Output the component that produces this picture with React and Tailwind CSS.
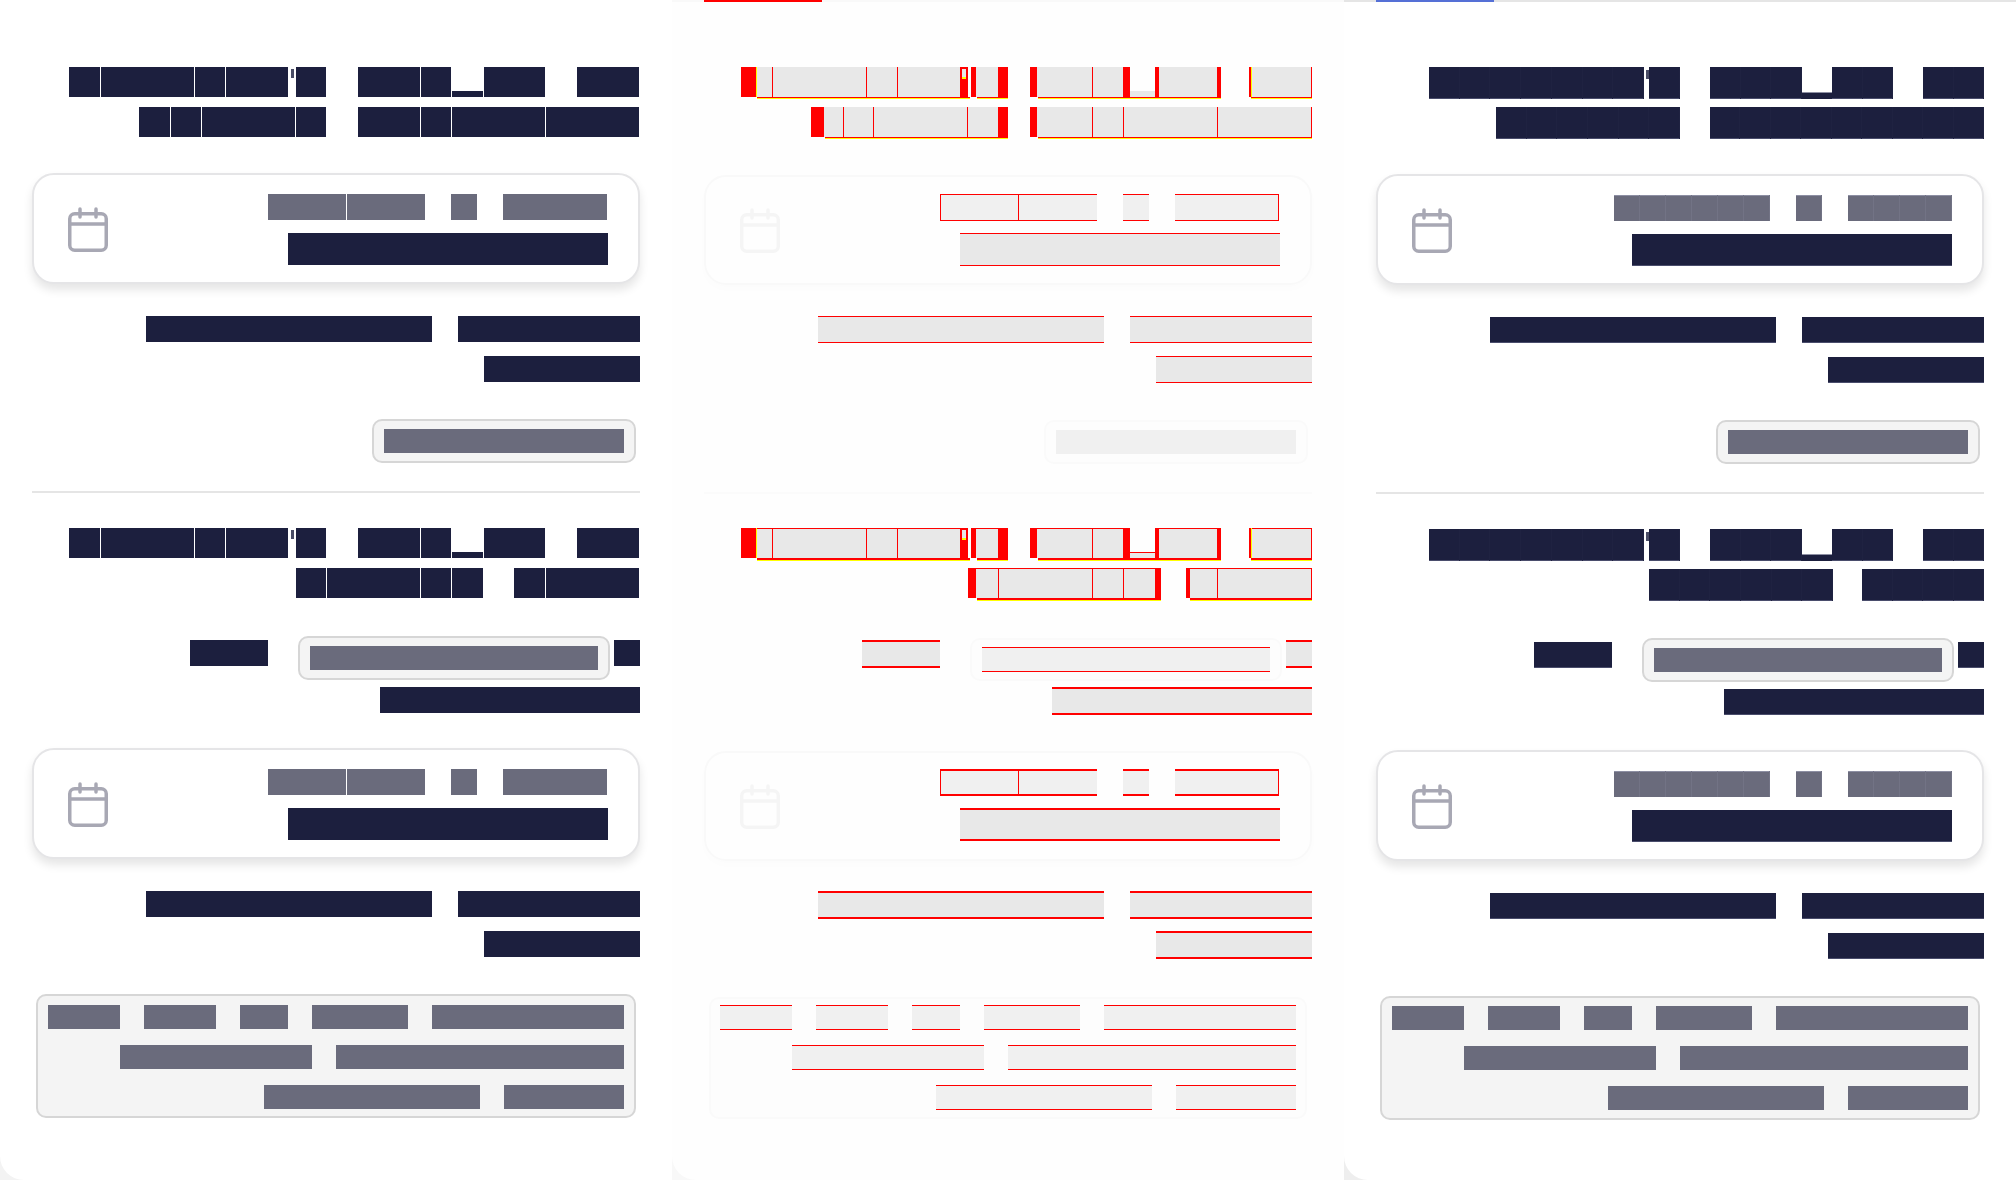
import React from "react";

// The reference has no legible text: every glyph is a solid box, so words are drawn as box runs.
const units = (n, total) => {
  const out = [];
  let used = 0;
  for (let i = 1; i <= n; i++) {
    const next = Math.round((total * i) / n);
    out.push(next - used);
    used = next;
  }
  return out;
};

const Bar = ({ w, cls }) => (
  <span className={"block shrink-0 " + cls} style={{ width: w }} />
);

const CalendarIcon = ({ cls }) => (
  <svg viewBox="0 0 40 45" fill="none" stroke="currentColor" strokeWidth="3.5" strokeLinecap="round" className={"h-[45px] w-[40px] shrink-0 " + cls}>
    <rect x="1.75" y="6.75" width="36.5" height="36.5" rx="5" />
    <path d="M2 17h36" />
    <path d="M12 2v8" />
    <path d="M28 2v8" />
  </svg>
);

const leftSkin = {
  rowH: "h-[30px]",
  notch: "mt-[24px] h-[6px]",
  tick: "ml-[2px] mr-px mt-0.5 h-[9px] w-[3px] bg-[#4a4d66]",
  gap: "gap-px",
  navy: "bg-[#1c1f3e]",
  gray: "bg-[#6a6b7c]",
  titleGap: "gap-[10px]",
  rowPr: "pr-px",
  cardMt: "mt-[36px]",
  inlineMt: "mt-[38px]",
  boxPt: "pt-[9px]",
};

const rightSkin = {
  rowH: "h-[32px] shadow-[inset_-1px_0_0_#1f2241,inset_0_-1px_0_#4a4d6c]",
  notch: "mt-[25px] h-[7px] shadow-[inset_0_1px_0_#8d8fa3]",
  tick: "ml-[2px] mt-[3px] h-[9px] w-[3px] bg-[#4a4d66]",
  gap: "gap-0",
  navy: "bg-[#1c1f3e] shadow-[inset_0_-1px_0_#4a4d6c]",
  gray: "bg-[#6a6b7c] shadow-[inset_-1px_0_0_#727385,inset_0_1px_0_#8d8fa3]",
  titleGap: "gap-2",
  rowPr: "",
  cardMt: "mt-[35px]",
  inlineMt: "mt-[37px]",
  boxPt: "pt-[8px]",
};

const Word = ({ parts, skin }) => (
  <span className={"flex items-start " + skin.gap}>
    {parts.map((p, i) => {
      if (p === "tick") return <span key={i} className={"block shrink-0 " + skin.tick} />;
      if (typeof p === "object") return <Bar key={i} w={p.notch} cls={"bg-[#1c1f3e] " + skin.notch} />;
      return <Bar key={i} w={p} cls={"bg-[#1c1f3e] " + skin.rowH} />;
    })}
  </span>
);

const TitleRow = ({ words, gap, skin }) => (
  <div className={"flex justify-end " + gap + " " + skin.rowPr}>
    {words.map((w, i) => (
      <Word key={i} parts={w} skin={skin} />
    ))}
  </div>
);

const InfoCard = ({ skin, split, tail }) => (
  <div className="flex h-[111px] items-start justify-between rounded-[22px] border-2 border-[#e5e5e7] bg-white pl-[34px] pr-[30px] pt-[19px] shadow-[0_6px_10px_rgba(0,0,0,0.1)]">
    <CalendarIcon cls="mt-[13px] text-[#a8a8b4]" />
    <div className="flex flex-col items-end gap-[13px]">
      <div className={"flex gap-[26px] " + skin.rowPr}>
        <div className={"flex " + skin.gap}>
          {split.map((w, i) => (
            <Bar key={i} w={w} cls={"h-[26px] " + skin.gray} />
          ))}
        </div>
        <Bar w={26} cls={"h-[26px] " + skin.gray} />
        <div className="flex">
          {tail.map((w, i) => (
            <Bar key={i} w={w} cls={"h-[26px] " + skin.gray} />
          ))}
        </div>
      </div>
      <Bar w={320} cls={"h-[32px] " + skin.navy} />
    </div>
  </div>
);

const DetailRows = ({ skin, mt }) => (
  <div className={"flex flex-col items-end gap-[14px] " + mt}>
    <div className="flex gap-[26px]">
      <Bar w={286} cls={"h-[26px] " + skin.navy} />
      <Bar w={182} cls={"h-[26px] " + skin.navy} />
    </div>
    <Bar w={156} cls={"h-[26px] " + skin.navy} />
  </div>
);

const Chip = ({ w, cls = "" }) => (
  <div className={"flex h-[44px] items-center justify-center rounded-[10px] border-2 border-[#d6d6d6] bg-[#f4f4f4] " + cls} style={{ width: w + 24 }}>
    <Bar w={w} cls="h-[24px] bg-[#6a6b7c]" />
  </div>
);

const boxRows = [
  [72, 72, 48, 96, 192],
  [192, 288],
  [216, 120],
];

const ShotPanel = ({ skin, t1, t2, split, tail, corner, track }) => (
  <div className={"h-[1180px] " + corner}>
    <div className="h-full rounded-bl-[24px] bg-white">
      {track}
      <div className="px-8 pt-[65px]">
        <div className={"flex flex-col " + skin.titleGap}>
          <TitleRow {...t1[0]} skin={skin} />
          <TitleRow {...t1[1]} skin={skin} />
        </div>
        <div className={skin.cardMt}>
          <InfoCard skin={skin} split={split} tail={tail} />
        </div>
        <DetailRows skin={skin} mt="mt-[32px]" />
        <div className="mt-[37px] flex justify-end">
          <Chip w={240} cls="mr-1" />
        </div>
        <div className="mt-[28px] h-0.5 bg-[#e5e5e5]" />
        <div className={"mt-[35px] flex flex-col " + skin.titleGap}>
          <TitleRow {...t2[0]} skin={skin} />
          <TitleRow {...t2[1]} skin={skin} />
        </div>
        <div className={"flex items-start justify-end " + skin.inlineMt}>
          <Bar w={78} cls={"mt-1 h-[26px] " + skin.navy} />
          <Chip w={288} cls="ml-[30px] mr-1" />
          <Bar w={26} cls={"mt-1 h-[26px] " + skin.navy} />
        </div>
        <div className="mt-[7px] flex justify-end">
          <Bar w={260} cls={"h-[26px] " + skin.navy} />
        </div>
        <div className="mt-[35px]">
          <InfoCard skin={skin} split={split} tail={tail} />
        </div>
        <DetailRows skin={skin} mt="mt-[32px]" />
        <div className={"mx-1 mt-[37px] flex h-[124px] flex-col items-end gap-4 rounded-[10px] border-2 border-[#d6d6d6] bg-[#f4f4f4] px-[10px] " + skin.boxPt}>
          {boxRows.map((row, i) => (
            <div key={i} className="flex gap-6">
              {row.map((w, j) => (
                <Bar key={j} w={w} cls="h-[24px] bg-[#6a6b7c]" />
              ))}
            </div>
          ))}
        </div>
      </div>
    </div>
  </div>
);

// diff panel: r red, g grey, w white, y yellow, t red with the apostrophe, n notch
const DiffWord = ({ parts, under, top, thick }) => (
  <span className="flex flex-col">
    <span className="flex h-[30px]">
      {parts.map(([tone, w], i) => {
        if (tone === "r") return <Bar key={i} w={w} cls="h-full bg-[#ff0000]" />;
        if (tone === "y") return <Bar key={i} w={w} cls="h-full bg-[#ffff00]" />;
        if (tone === "w") return <Bar key={i} w={w} cls="h-full" />;
        if (tone === "g") return <Bar key={i} w={w} cls={"h-full bg-[#e8e8e8] " + (top ? "border-t border-[#ff0000]" : "")} />;
        if (tone === "t")
          return (
            <span key={i} className="flex h-full shrink-0 justify-center bg-[#ff0000]" style={{ width: w }}>
              <span className="mt-0.5 h-[10px] w-1 border-b-2 border-[#ffff00] bg-[#e8e8e8]" />
            </span>
          );
        return <Bar key={i} w={w} cls={"mt-[24px] h-[6px] bg-[#e8e8e8] " + (top ? "border-t border-[#ff0000]" : "")} />;
      })}
    </span>
    <span className={"flex bg-white " + (thick ? "h-0.5" : "h-px")}>
      {under.map(([ml, w], i) => (
        <span key={i} className="block bg-[#ff0000]" style={{ marginLeft: ml, width: w }} />
      ))}
    </span>
    <span className="flex h-px">
      {under.map(([ml, w], i) => (
        <span key={i} className="block bg-[#ffff00]" style={{ marginLeft: ml, width: w }} />
      ))}
    </span>
  </span>
);

const title1Words = [
  {
    parts: [["r", 15], ["y", 1], ["g", 15], ["r", 1], ["g", 93], ["r", 1], ["g", 30], ["r", 1], ["g", 62], ["t", 8], ["w", 3], ["r", 5], ["g", 22], ["r", 10]],
    under: [[16, 213], [7, 31]],
  },
  {
    parts: [["r", 7], ["g", 55], ["r", 1], ["g", 30], ["r", 7], ["n", 25], ["r", 4], ["g", 58], ["r", 4]],
    under: [[8, 183]],
  },
  { parts: [["r", 2], ["y", 1], ["g", 59], ["r", 1]], under: [[2, 61]] },
];

const DiffCard = ({ thick }) => {
  const edge = thick ? "border-y-2" : "border-y";
  return (
    <div className={"flex h-[110px] items-start justify-between rounded-[22px] border-2 border-[#f9f9f9] pl-[34px] pr-[30px] shadow-[0_4px_10px_rgba(0,0,0,0.012)] " + (thick ? "pt-4" : "pt-[17px]")}>
      <CalendarIcon cls={"text-[#f5f5f5] " + (thick ? "mt-[15px]" : "mt-[14px]")} />
      <div className="flex flex-col items-end gap-[12px]">
        <div className="flex pr-px">
          <Bar w={78} cls={"h-[27px] border-l bg-[#f0f0f0] border-[#ff0000] " + edge} />
          <Bar w={1} cls="h-[27px] bg-[#ff0000]" />
          <Bar w={78} cls={"h-[27px] bg-[#f0f0f0] border-[#ff0000] " + edge} />
          <Bar w={26} cls={"ml-[26px] h-[27px] bg-[#f0f0f0] border-[#ff0000] " + edge} />
          <Bar w={104} cls={"ml-[26px] h-[27px] border-r bg-[#f0f0f0] border-[#ff0000] " + edge} />
        </div>
        <Bar w={320} cls={"h-[33px] bg-[#e8e8e8] border-[#ff0000] " + edge} />
      </div>
    </div>
  );
};

const DiffRows = ({ thick, mt }) => {
  const cls = (thick ? "h-[28px] border-y-2" : "h-[27px] border-y") + " border-[#ff0000] bg-[#e8e8e8]";
  return (
    <div className={"flex flex-col items-end " + (thick ? "gap-3 " : "gap-[13px] ") + mt}>
      <div className="flex gap-[26px]">
        <Bar w={286} cls={cls} />
        <Bar w={182} cls={cls} />
      </div>
      <Bar w={156} cls={cls} />
    </div>
  );
};

const DiffPanel = () => (
  <div className="h-[1180px] bg-[#f8f8f8]">
    <div className="h-full rounded-bl-[24px] bg-[#fefefe]">
      <div className="h-0.5 bg-[#f9f9f9] pl-8">
        <div className="h-full w-[118px] bg-[#ff0000]" />
      </div>
      <div className="px-8 pt-[65px]">
        <div className="flex justify-end">
          <DiffWord {...title1Words[0]} />
          <span className="w-[22px]" />
          <DiffWord {...title1Words[1]} />
          <span className="w-[28px]" />
          <DiffWord {...title1Words[2]} />
        </div>
        <div className="mt-2 flex justify-end gap-[22px]">
          <DiffWord
            parts={[["r", 13], ["g", 19], ["r", 1], ["g", 29], ["r", 1], ["g", 93], ["r", 1], ["g", 30], ["r", 10]]}
            under={[[14, 183]]}
          />
          <DiffWord
            parts={[["r", 7], ["g", 55], ["r", 1], ["g", 30], ["r", 1], ["g", 93], ["r", 1], ["g", 93], ["r", 1]]}
            under={[[8, 274]]}
          />
        </div>
        <div className="mt-[36px]">
          <DiffCard />
        </div>
        <DiffRows mt="mt-[31px]" />
        <div className="mt-[37px] flex justify-end">
          <div className="mr-1 flex h-[44px] w-[264px] items-center justify-center rounded-[10px] border-2 border-[#fafafa] bg-[#fdfdfd]">
            <Bar w={240} cls="h-[24px] bg-[#f0f0f0]" />
          </div>
        </div>
        <div className="mt-[28px] h-0.5 bg-[#fbfbfb]" />
        <div className="mt-[34px] flex justify-end">
          <DiffWord {...title1Words[0]} top thick />
          <span className="w-[22px]" />
          <DiffWord {...title1Words[1]} top thick />
          <span className="w-[28px]" />
          <DiffWord {...title1Words[2]} top thick />
        </div>
        <div className="mt-[7px] flex justify-end gap-[25px]">
          <DiffWord
            parts={[["r", 8], ["g", 22], ["r", 1], ["g", 93], ["r", 1], ["g", 30], ["r", 1], ["g", 31], ["r", 6]]}
            under={[[9, 184]]}
            top
            thick
          />
          <DiffWord
            parts={[["r", 4], ["g", 27], ["r", 1], ["g", 93], ["r", 1]]}
            under={[[4, 122]]}
            top
            thick
          />
        </div>
        <div className="mt-[35px] flex items-start justify-end">
          <Bar w={78} cls="mt-1 h-[28px] border-y-2 border-[#ff0000] bg-[#e8e8e8]" />
          <div className="ml-[30px] mr-1 mt-0.5 flex h-[43px] w-[312px] items-center justify-center rounded-[10px] border-2 border-[#fafafa] bg-[#fdfdfd]">
            <Bar w={288} cls="h-[25px] border-y border-[#ff0000] bg-[#f0f0f0]" />
          </div>
          <Bar w={26} cls="mt-1 h-[28px] border-y-2 border-[#ff0000] bg-[#e8e8e8]" />
        </div>
        <div className="mt-[6px] flex justify-end">
          <Bar w={260} cls="h-[28px] border-y-2 border-[#ff0000] bg-[#e8e8e8]" />
        </div>
        <div className="mt-[36px]">
          <DiffCard thick />
        </div>
        <DiffRows thick mt="mt-[30px]" />
        <div className="mx-[5px] mt-[38px] flex h-[122px] flex-col items-end gap-[15px] rounded-[10px] border-2 border-[#fafafa] bg-[#fdfdfd] px-[9px] pt-[6px]">
          {boxRows.map((row, i) => (
            <div key={i} className="flex gap-6">
              {row.map((w, j) => (
                <Bar key={j} w={w} cls="h-[25px] border-y border-[#ff0000] bg-[#f0f0f0]" />
              ))}
            </div>
          ))}
        </div>
      </div>
    </div>
  </div>
);

const leftT1 = [
  {
    gap: "gap-[32px]",
    words: [
      [31, 93, 30, 62, "tick", 30],
      [62, 30, { notch: 31 }, 61],
      [62],
    ],
  },
  {
    gap: "gap-[32px]",
    words: [
      [31, 30, 93, 30],
      [62, 30, 93, 93],
    ],
  },
];

const leftT2 = [
  leftT1[0],
  {
    gap: "gap-[31px]",
    words: [
      [30, 93, 30, 31],
      [31, 93],
    ],
  },
];

const rightRow1 = {
  gap: "gap-[30px]",
  words: [
    [...units(7, 215), "tick", 31],
    [...units(3, 92), { notch: 30 }, ...units(2, 61)],
    units(2, 61),
  ],
};

const rightT1 = [
  rightRow1,
  {
    gap: "gap-[30px]",
    words: [units(6, 184), units(9, 274)],
  },
];

const rightT2 = [
  rightRow1,
  {
    gap: "gap-[29px]",
    words: [units(6, 184), units(4, 122)],
  },
];

export default function App() {
  return (
    <div className="grid h-[1180px] w-[2016px] grid-cols-3 overflow-hidden bg-white">
      <ShotPanel skin={leftSkin} t1={leftT1} t2={leftT2} split={[78, 78]} tail={[104]} corner="bg-[#f3f3f3]" track={<div className="h-0.5" />} />
      <DiffPanel />
      <ShotPanel
        skin={rightSkin}
        t1={rightT1}
        t2={rightT2}
        split={[26, 26, 26, 26, 26, 26]}
        tail={[26, 26, 26, 26]}
        corner="bg-[#eeeeee]"
        track={
          <div className="h-0.5 bg-[#e5e5e5] pl-8">
            <div className="h-full w-[118px] bg-[#5570d6]" />
          </div>
        }
      />
    </div>
  );
}
